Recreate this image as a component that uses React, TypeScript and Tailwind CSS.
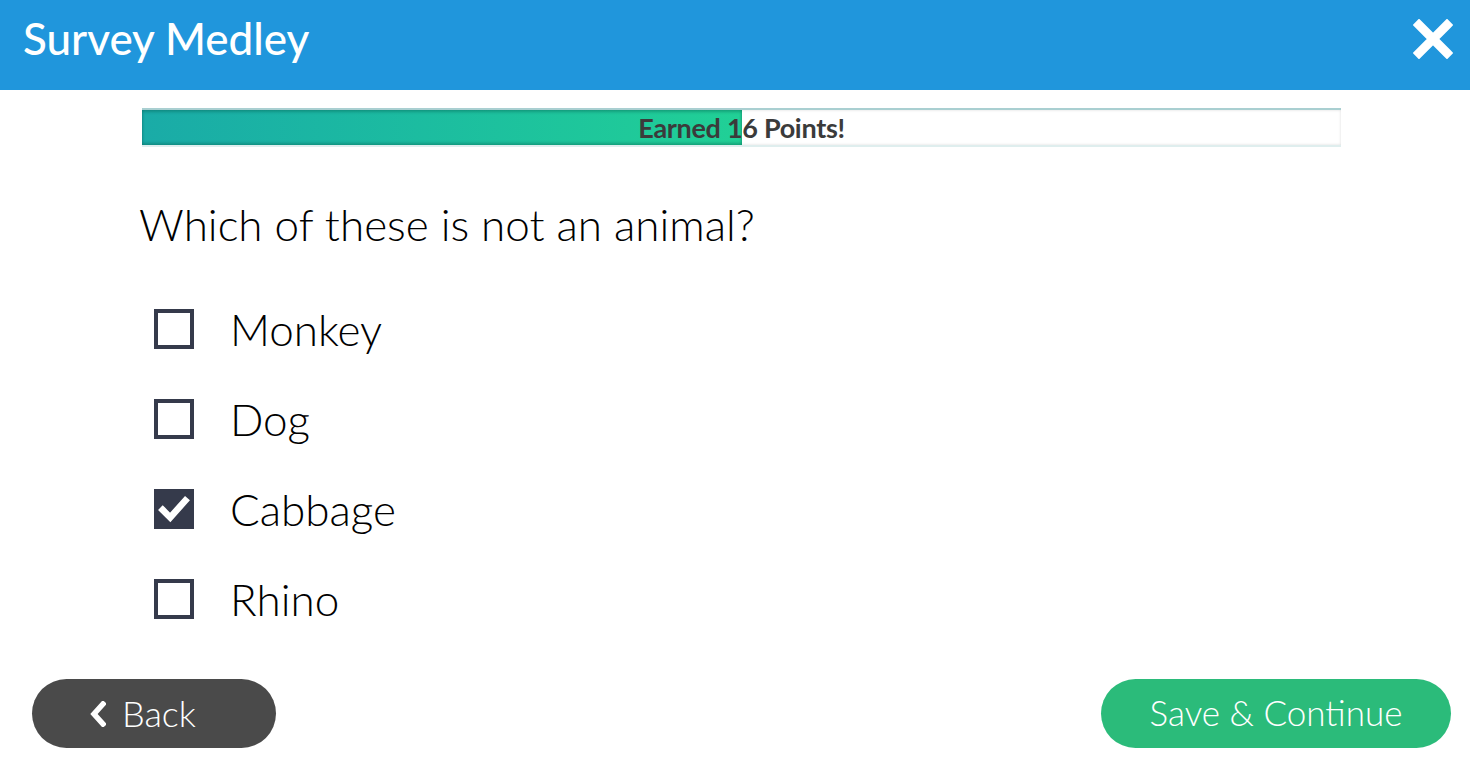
import React from "react";

const options = [
  { label: "Monkey", checked: false },
  { label: "Dog", checked: false },
  { label: "Cabbage", checked: true },
  { label: "Rhino", checked: false },
];

function CheckBox({ checked }: { checked: boolean }) {
  return (
    <div
      className={
        "w-[40px] h-[40px] border-[4px] border-[#353a4b] flex items-center justify-center " +
        (checked ? "bg-[#353a4b]" : "bg-white")
      }
    >
      {checked && (
        <svg width="34" height="30" viewBox="0 0 34 30">
          <path d="M5 16 L13 24 L29 6" fill="none" stroke="white" strokeWidth="7" strokeLinecap="square" />
        </svg>
      )}
    </div>
  );
}

export default function App() {
  return (
    <div className="w-[1470px] h-[781px] bg-white flex flex-col" style={{ fontFamily: "Lato, 'Open Sans', sans-serif" }}>
      <header className="h-[90px] bg-[#2096dc] flex items-center justify-between pl-[23px] pr-[17px]">
        <h1 className="text-white text-[44px] font-medium leading-none pb-[14px]">Survey Medley</h1>
        <svg width="40" height="40" viewBox="0 0 40 40" className="mb-[12px]">
          <path d="M6 6 L34 34 M34 6 L6 34" stroke="white" strokeWidth="9" strokeLinecap="square" />
        </svg>
      </header>

      <div className="ml-[142px] mt-[18px] w-[1199px] h-[39px] relative border-t-[2px] border-[#a9cfd1] border-b-[2px] border-b-[#dfeeee] bg-white shadow-[inset_0_0_3px_rgba(0,0,0,0.15)]">
        <div className="h-full w-[50%] bg-gradient-to-r from-[#1aaba7] to-[#21d096] shadow-[inset_0_2px_3px_rgba(0,80,70,0.35),inset_0_-2px_3px_rgba(0,80,70,0.35)]" />
        <div className="absolute inset-0 flex items-center justify-center text-[27px] font-bold text-[#3b3b3b] tracking-[-0.3px] pt-[2px]">
          Earned 16 Points!
        </div>
      </div>

      <h2 className="ml-[139px] mt-[55px] text-[44px] font-light text-black leading-none">Which of these is not an animal?</h2>

      <div className="ml-[154px] mt-[63px] flex flex-col gap-[50px]">
        {options.map((o) => (
          <div key={o.label} className="flex items-center h-[40px]">
            <CheckBox checked={o.checked} />
            <span className="ml-[36px] text-[44px] font-light text-black leading-none">{o.label}</span>
          </div>
        ))}
      </div>

      <div className="mt-auto mb-[33px] flex justify-between pl-[32px] pr-[19px]">
        <button className="w-[244px] h-[69px] rounded-full bg-[#4a4a4a] text-white text-[36px] font-light flex items-center pl-[58px] gap-[16px]">
          <svg width="16" height="26" viewBox="0 0 16 26">
            <path d="M13 3 L4 13 L13 23" fill="none" stroke="white" strokeWidth="5.5" strokeLinecap="square" />
          </svg>
          <span className="leading-none pb-[2px]">Back</span>
        </button>
        <button className="w-[350px] h-[69px] rounded-full bg-[#2bbb7a] text-white text-[35px] font-light flex items-center justify-center">
          <span className="leading-none pb-[2px]">Save &amp; Continue</span>
        </button>
      </div>
    </div>
  );
}
